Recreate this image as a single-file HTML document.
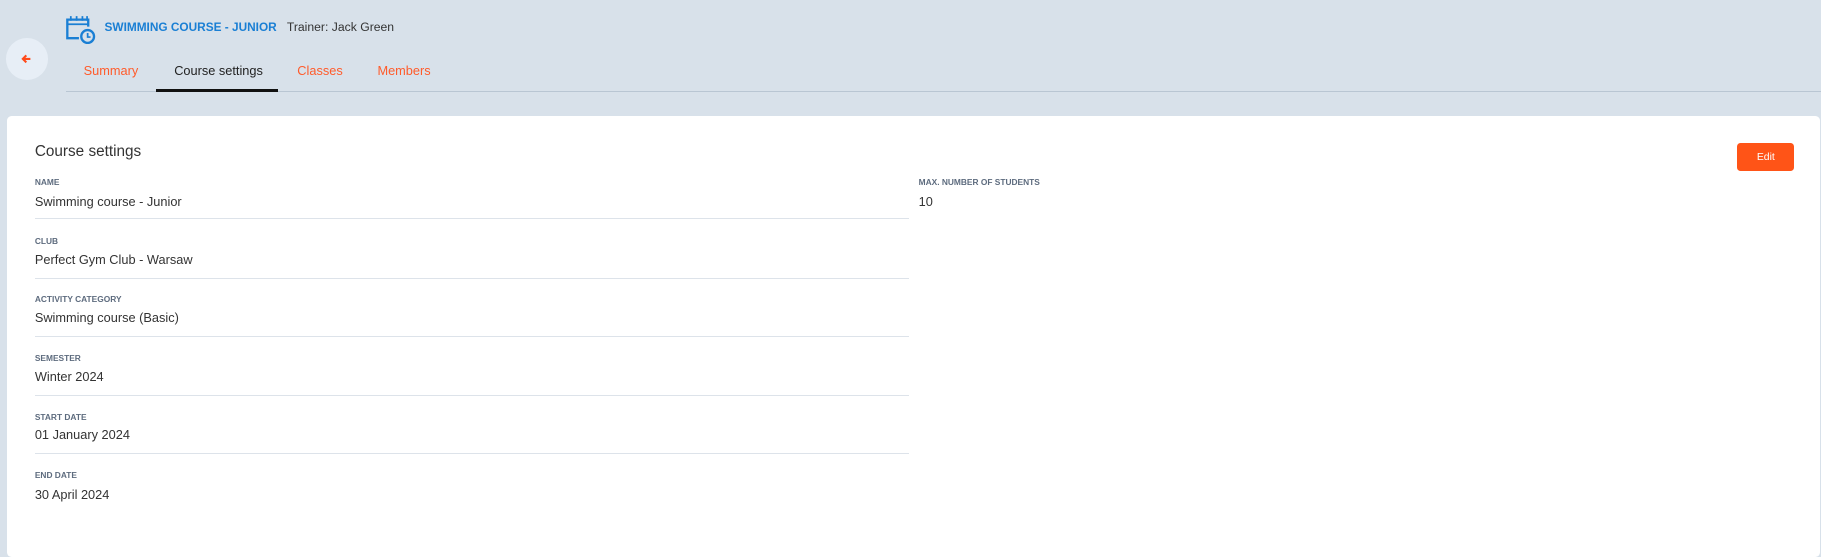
<!DOCTYPE html>
<html><head><meta charset="utf-8"><style>
html{zoom:1.16135}
*{margin:0;padding:0;box-sizing:border-box}
body{width:1568px;height:461px;background:#d8e1ea;font-family:"Liberation Sans",Arial,sans-serif;position:relative;overflow:hidden;color:#333}
.a{position:absolute;white-space:nowrap}
.back{left:5px;top:33px;width:36px;height:36px;border-radius:50%;background:#e7eef6}
.title{left:90px;top:17px;font-size:10.2px;font-weight:bold;color:#1a7fd4}
.trainer{left:247px;top:17px;font-size:10.5px;color:#333}
.tab{top:54px;font-size:11px;color:#ff5b2b}
.line{left:57px;top:78px;width:1511px;height:1px;background:#b9c6d3}
.act{left:134px;top:77px;width:105px;height:2px;background:#111}
.card{left:6px;top:100px;width:1561px;height:380px;background:#fff;border-radius:4px}
.h{left:30px;top:123px;font-size:13.2px;color:#333}
.lbl{font-size:7.2px;font-weight:bold;color:#5d6b7e}
.val{font-size:11px;color:#333}
.div{left:30px;width:753px;height:1px;background:#dde3ea}
.edit{left:1496px;top:123px;width:49px;height:24px;background:#ff5417;border-radius:3px;color:#fff;font-size:9px;text-align:center;line-height:25px}
</style></head><body>
<div class="a back"><svg width="36" height="36" viewBox="0 0 36 36"><path d="M21 18h-6.5M17.5 15l-3 3 3 3" stroke="#ff4a1a" stroke-width="1.8" fill="none"/></svg></div>
<svg class="a" style="left:56px;top:13px" width="28" height="26" viewBox="0 0 28 26"><g fill="none" stroke="#1a7fd4" stroke-width="2"><path d="M12 20H2V4h18v6"/><path d="M2 8h18" stroke-width="1.5"/><path d="M5 1v4M10 1v4M15 1v4M19 1v4" stroke-width="1.5"/><circle cx="19.5" cy="18.5" r="5.5"/><path d="M19.5 15.5v3.5h2.5" stroke-width="1.5"/></g></svg>
<div class="a title">SWIMMING COURSE - JUNIOR</div>
<div class="a trainer">Trainer: Jack Green</div>
<div class="a tab" style="left:72px">Summary</div>
<div class="a tab" style="left:150px;color:#222">Course settings</div>
<div class="a tab" style="left:256px">Classes</div>
<div class="a tab" style="left:325px">Members</div>
<div class="a line"></div><div class="a act"></div>
<div class="a card"></div>
<div class="a h">Course settings</div>
<div class="a edit">Edit</div>
<div class="a lbl" style="left:30px;top:152px">NAME</div><div class="a val" style="left:30px;top:167px">Swimming course - Junior</div><div class="a div" style="top:188px"></div>
<div class="a lbl" style="left:30px;top:203px">CLUB</div><div class="a val" style="left:30px;top:217px">Perfect Gym Club - Warsaw</div><div class="a div" style="top:239px"></div>
<div class="a lbl" style="left:30px;top:253px">ACTIVITY CATEGORY</div><div class="a val" style="left:30px;top:267px">Swimming course (Basic)</div><div class="a div" style="top:289px"></div>
<div class="a lbl" style="left:30px;top:304px">SEMESTER</div><div class="a val" style="left:30px;top:318px">Winter 2024</div><div class="a div" style="top:340px"></div>
<div class="a lbl" style="left:30px;top:355px">START DATE</div><div class="a val" style="left:30px;top:368px">01 January 2024</div><div class="a div" style="top:390px"></div>
<div class="a lbl" style="left:30px;top:405px">END DATE</div><div class="a val" style="left:30px;top:419px">30 April 2024</div>
<div class="a lbl" style="left:791px;top:152px">MAX. NUMBER OF STUDENTS</div><div class="a val" style="left:791px;top:167px">10</div>
</body></html>
